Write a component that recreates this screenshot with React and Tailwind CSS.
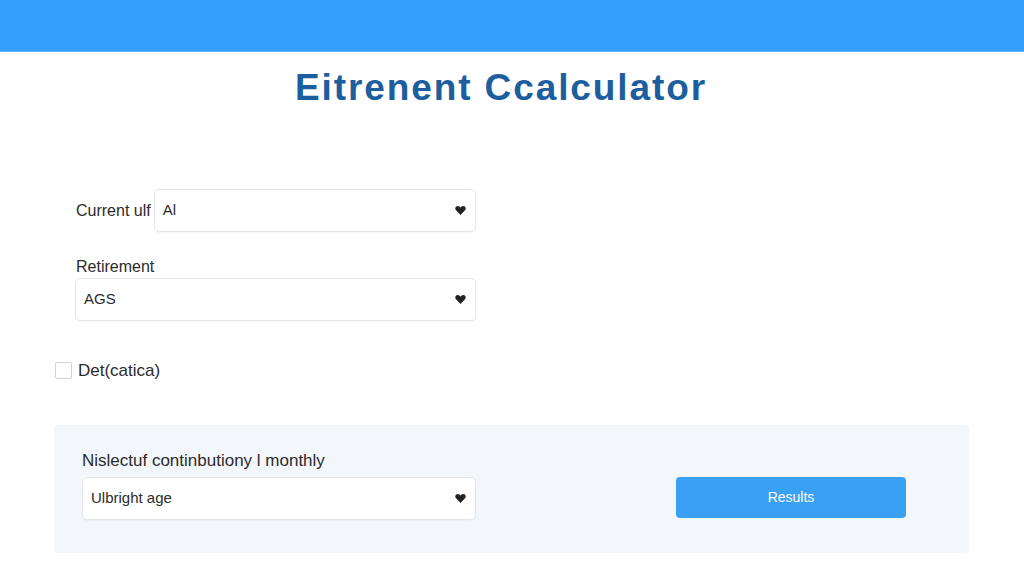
import React from "react";

const Arrow = () => (
  <svg width="11" height="9" viewBox="0 0 11 9" className="flex-shrink-0">
    <path
      d="M5.5 9 L1 4.2 C-0.4 2.6 0.4 0 2.7 0 C4 0 4.9 0.8 5.5 1.7 C6.1 0.8 7 0 8.3 0 C10.6 0 11.4 2.6 10 4.2 Z"
      fill="#222"
    />
  </svg>
);

const Select = ({ value, className = "" }) => (
  <div
    className={`h-[43px] bg-white border border-[#e3e7ec] rounded-[5px] flex items-center justify-between pl-[8px] pr-[9px] shadow-[0_1px_2px_rgba(0,0,0,0.04)] ${className}`}
  >
    <span className="text-[15px] text-[#2b2b2b]">{value}</span>
    <Arrow />
  </div>
);

export default function App() {
  return (
    <div
      className="w-[1024px] h-[585px] bg-white overflow-hidden"
      style={{ fontFamily: '"Liberation Sans", Arial, sans-serif' }}
    >
      {/* Header bar */}
      <div className="h-[52px] bg-[#34a0fb] border-b border-[#5fb4f7]" />

      {/* Title */}
      <h1 className="mt-[17px] pr-[22px] text-center text-[37px] leading-[38px] font-bold text-[#1d5e9f] tracking-[1.9px]">
        Eitrenent Ccalculator
      </h1>

      {/* Form */}
      <div className="ml-[76px] mt-[82px] w-[400px]">
        <div className="flex items-center">
          <span className="text-[16px] text-[#2b2b2b] mr-[3px] whitespace-nowrap">
            Current ulf
          </span>
          <Select value="Al" className="flex-1" />
        </div>

        <div className="mt-[26px] -ml-[1px]">
          <div className="text-[16px] text-[#2b2b2b] leading-[18px] ml-[1px]">
            Retirement
          </div>
          <Select value="AGS" className="mt-[2px]" />
        </div>
      </div>

      <div className="flex items-center mt-[37px] ml-[55px]">
        <div className="w-[17px] h-[17px] border border-[#cfd3d8] rounded-[2px] bg-white" />
        <span className="ml-[6px] text-[17px] text-[#2b2b2b]">Det(catica)</span>
      </div>

      {/* Panel */}
      <div className="mt-[41px] mx-[54px] w-[915px] h-[128px] bg-[#f3f7fb] rounded-[4px] flex items-start pl-[28px] pt-[26px]">
        <div className="w-[394px]">
          <div className="text-[17px] text-[#2b2b2b] leading-[20px]">
            Nislectuf continbutiony l monthly
          </div>
          <Select value="Ulbright age" className="mt-[6px]" />
        </div>
        <button className="ml-[200px] mt-[26px] w-[230px] h-[41px] bg-[#39a0f4] rounded-[4px] text-white text-[14px] flex items-center justify-center">
          Results
        </button>
      </div>
    </div>
  );
}
